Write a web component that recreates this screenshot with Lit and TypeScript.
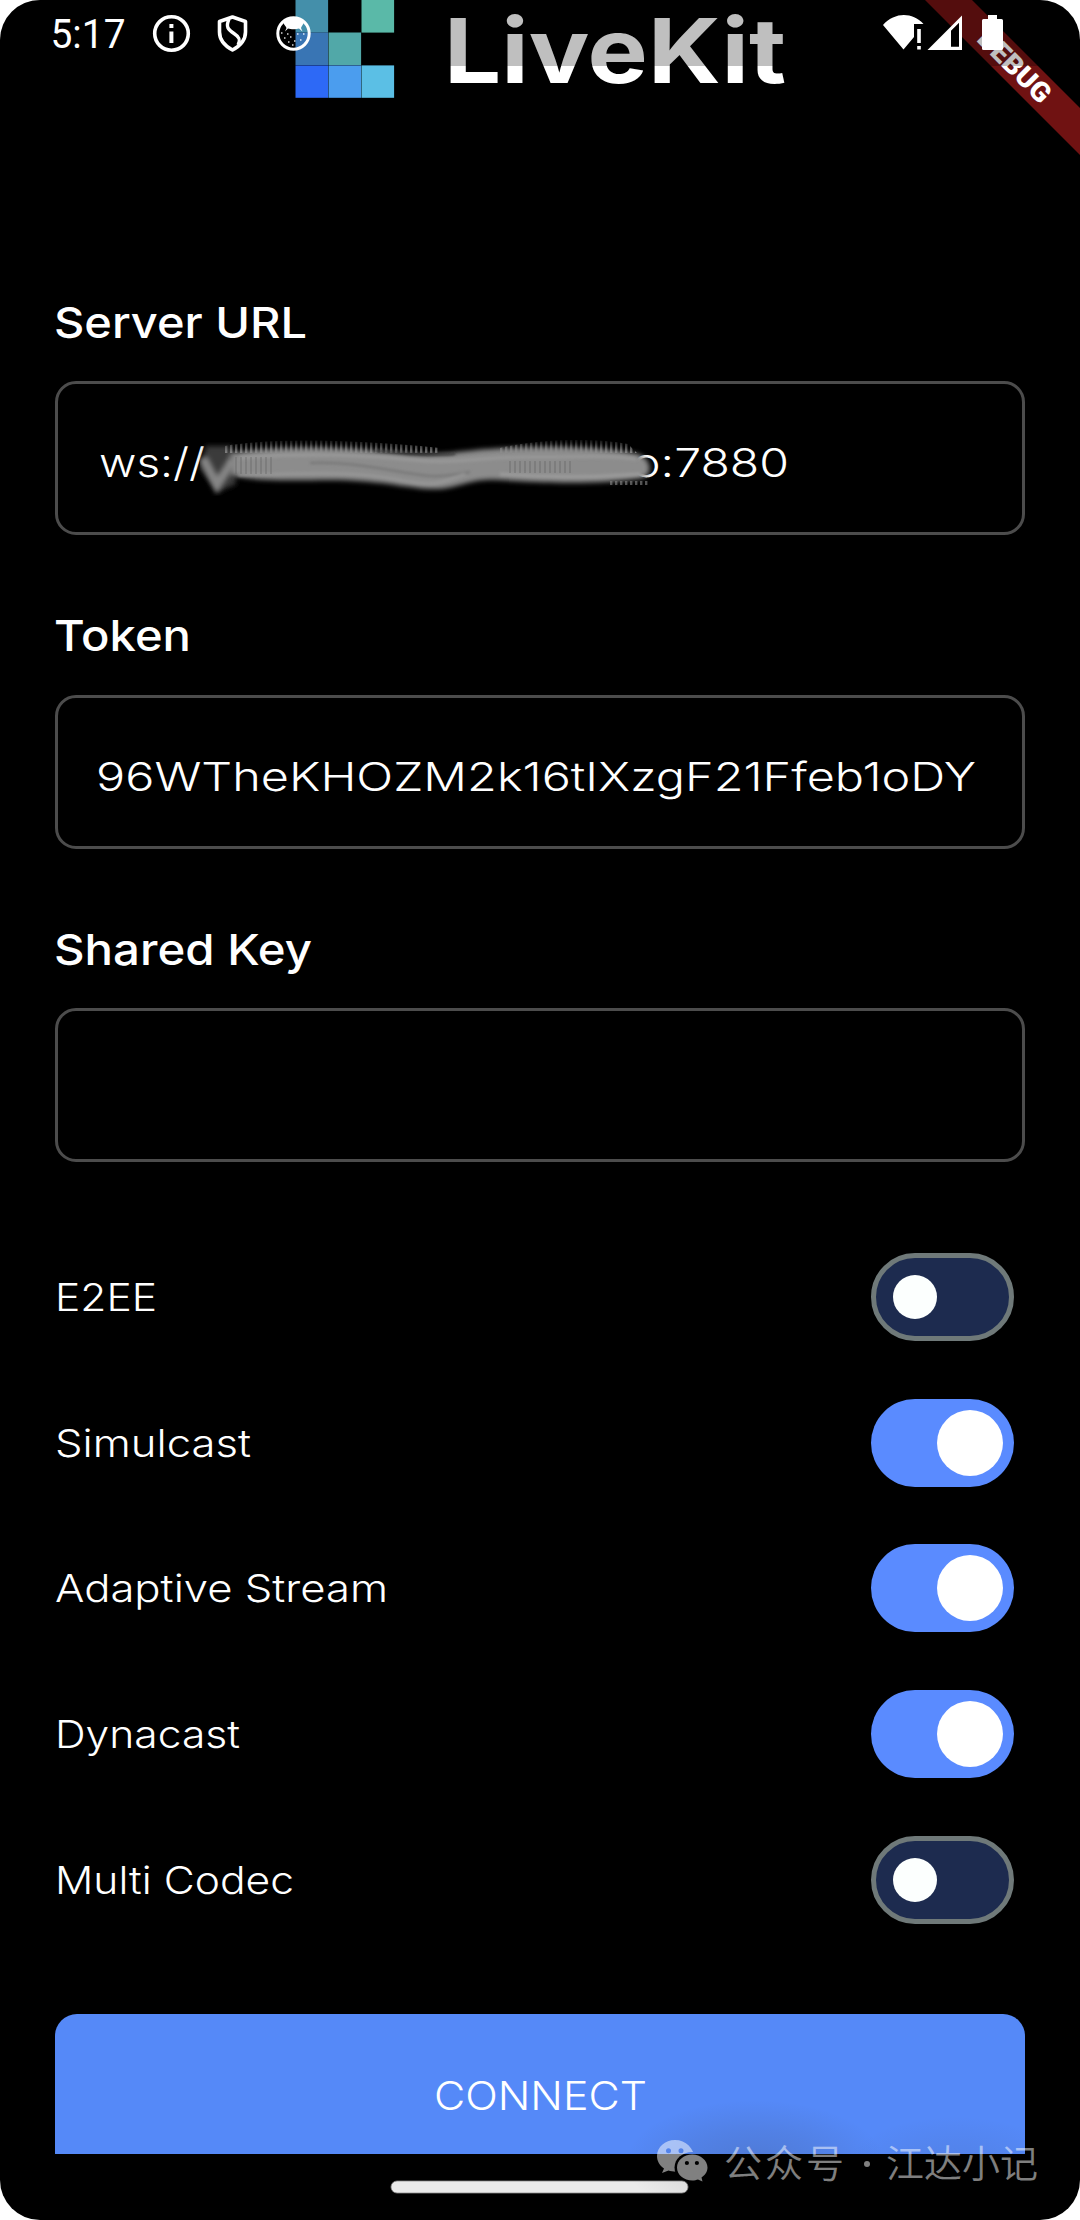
import { LitElement, html, svg, css } from "lit";
import { customElement, property } from "lit/decorators.js";

interface Field {
  label: string;
  width: number;
  kind: "url" | "token" | "empty";
}

interface Option {
  label: string;
  width: number;
  on: boolean;
}

const FIELDS: Field[] = [
  { label: "Server URL", width: 253, kind: "url" },
  { label: "Token", width: 137, kind: "token" },
  { label: "Shared Key", width: 258, kind: "empty" },
];

const OPTIONS: Option[] = [
  { label: "E2EE", width: 102, on: false },
  { label: "Simulcast", width: 196, on: true },
  { label: "Adaptive Stream", width: 333, on: true },
  { label: "Dynacast", width: 185, on: true },
  { label: "Multi Codec", width: 239, on: false },
];

/* A line of text whose advance is fitted to a fixed width. */
@customElement("fit-text")
class FitText extends LitElement {
  @property() text = "";
  @property({ type: Number }) width = 100;
  @property({ type: Number }) height = 44;
  @property({ type: Number }) baseline = 34;

  static styles = css`
    :host {
      display: block;
      flex: none;
    }
    svg {
      display: block;
      overflow: visible;
    }
    text {
      fill: currentColor;
    }
  `;

  render() {
    return html`<svg width=${this.width} height=${this.height}>
      <text x="0" y=${this.baseline} textLength=${this.width} lengthAdjust="spacingAndGlyphs">${this.text}</text>
    </svg>`;
  }
}

@customElement("toggle-switch")
class ToggleSwitch extends LitElement {
  @property({ type: Boolean, reflect: true }) on = false;

  static styles = css`
    :host {
      display: flex;
      align-items: center;
      box-sizing: border-box;
      width: 143px;
      height: 88px;
      border-radius: 44px;
      border: 5.5px solid #6f7979;
      background: #1d2b4f;
      padding: 0 16.5px;
    }
    :host([on]) {
      border: 0;
      background: #5a8bff;
      justify-content: flex-end;
      padding: 0 11px;
    }
    .knob {
      width: 44px;
      height: 44px;
      border-radius: 50%;
      background: #fcfffe;
    }
    :host([on]) .knob {
      width: 66px;
      height: 66px;
      background: #fff;
    }
  `;

  render() {
    return html`<span class="knob"></span>`;
  }
}

@customElement("app-root")
class AppRoot extends LitElement {
  static styles = css`
    :host {
      display: block;
      background: #fff;
      font-family: Inter, "Liberation Sans", sans-serif;
      color: #fff;
    }
    .screen {
      position: relative;
      width: 1080px;
      height: 2220px;
      border-radius: 40px;
      overflow: hidden;
      background: #000;
    }
    .page {
      box-sizing: border-box;
      height: 2154px;
      overflow: hidden;
      padding: 0 55px;
    }
    .brand {
      height: 303.5px;
      display: flex;
      padding-left: 240px;
    }
    .mark {
      display: block;
      flex: none;
    }
    .word {
      margin-left: 49px;
      font-size: 90px;
      font-weight: 700;
    }
    .fields {
      display: flex;
      flex-direction: column;
      gap: 82px;
    }
    .field {
      display: flex;
      flex-direction: column;
      gap: 33.5px;
    }
    .label {
      font-size: 43px;
      font-weight: 500;
      margin-left: -1px;
    }
    .box {
      box-sizing: border-box;
      height: 154px;
      border: 3px solid #4c4c4c;
      border-radius: 21px;
      display: flex;
      padding-left: 38px;
      font-size: 40px;
      font-weight: 350;
    }
    .scheme {
      margin-left: 3px;
    }
    .smudge {
      position: relative;
      z-index: 1;
      display: block;
      flex: none;
      overflow: visible;
    }
    .options {
      margin-top: 91px;
      display: flex;
      flex-direction: column;
      gap: 57.7px;
      font-size: 38.5px;
      font-weight: 350;
    }
    .option {
      display: flex;
      justify-content: space-between;
      padding-right: 11px;
    }
    .connect {
      margin-top: 90.7px;
      height: 160px;
      border-radius: 22px;
      background: #5589f8;
      display: flex;
      justify-content: center;
      font-size: 39px;
      font-weight: 350;
    }
    .overlay {
      position: absolute;
      left: 0;
      top: 0;
      display: block;
    }
    .clock {
      font-family: Roboto, sans-serif;
      font-size: 40px;
    }
    .debug {
      font-family: Roboto, sans-serif;
      font-size: 27.5px;
      font-weight: 900;
    }
    .credit {
      font-family: "Noto Sans CJK SC", sans-serif;
      font-size: 38px;
      font-weight: 350;
    }
  `;

  private renderValue(kind: Field["kind"]) {
    if (kind === "token") {
      return html`<fit-text text="96WTheKHOZM2k16tIXzgF21Ffeb1oDY" .width=${880} .height=${148} .baseline=${93}></fit-text>`;
    }
    if (kind === "url") {
      return html`<fit-text class="scheme" text="ws://" .width=${106} .height=${148} .baseline=${93}></fit-text>
        ${this.renderSmudge()}
        <fit-text text="o:7880" .width=${157} .height=${148} .baseline=${93}></fit-text>`;
    }
    return html``;
  }

  /* Rubbed-out part of the address; drawn in page coordinates. */
  private renderSmudge() {
    return html`<svg class="smudge" width="427" height="148" viewBox="205 384 427 148">
      <defs>
        <filter id="soft" x="-10%" y="-40%" width="120%" height="180%"><feGaussianBlur stdDeviation="2.8" /></filter>
        <filter id="fine" x="-10%" y="-60%" width="120%" height="220%"><feGaussianBlur stdDeviation="1.6" /></filter>
        <pattern id="comb" width="5" height="10" patternUnits="userSpaceOnUse">
          <rect width="2.4" height="10" fill="#8a8a8a" />
        </pattern>
        <linearGradient id="fade" x1="0" y1="0" x2="0" y2="1">
          <stop offset="0" stop-color="#000" /><stop offset="1" stop-color="#ddd" />
        </linearGradient>
        <mask id="top" maskUnits="userSpaceOnUse" x="190" y="438" width="470" height="20"><rect x="190" y="438" width="470" height="15" fill="url(#fade)" /></mask>
      </defs>
      <path d="M206 446 L232 446 L236 484 L218 492 L200 468Z" fill="#3a3a3a" filter="url(#soft)" />
      <path d="M203 458 L217 485 L233 460" fill="none" stroke="#858585" stroke-width="9" filter="url(#soft)" />
      <g mask="url(#top)">
        <path d="M225 446 C260 440 330 437 440 448 L440 456 L225 456Z M500 448 C540 438 600 438 628 444 L640 456 L500 456Z" fill="url(#comb)" />
      </g>
      <path d="M230 453 C290 445 350 448 400 453 C440 458 462 449 510 448 C560 446 610 448 638 454 C652 459 653 474 643 478
        C600 484 560 484 500 480 C465 478 460 490 430 489 C400 487 375 479 320 480 C275 481 252 480 231 475Z"
        fill="#8c8c8c" filter="url(#soft)" />
      <g fill="none" filter="url(#fine)">
        <path d="M240 458 C300 453 360 455 415 460 C450 464 480 457 530 457 S610 455 636 459" stroke="#999" stroke-width="3" />
        <path d="M310 463 C360 461 395 473 430 476 C450 477 456 474 470 472" stroke="#747474" stroke-width="2" />
        <path d="M375 451 C405 453 425 456 455 454" stroke="#333" stroke-width="2.2" />
        <path d="M238 475 C300 474 350 470 395 479 S440 482 465 474" stroke="#989898" stroke-width="2.5" />
        <path d="M500 474 C550 478 600 477 640 474" stroke="#9c9c9c" stroke-width="3" />
      </g>
      <path d="M236 457 V474 M241 457 V474 M246 457 V474 M251 457 V474 M256 457 V474 M261 457 V474 M266 457 V474 M271 457 V474 M510 461 V473 M515 461 V473 M520 461 V473 M525 461 V473 M530 461 V473 M535 461 V473 M540 461 V473 M545 461 V473 M550 461 V473 M555 461 V473 M560 461 V473 M565 461 V473 M570 461 V473" stroke="#5c5c5c" stroke-width="2" opacity=".3" />
      <path d="M610 483 H650" stroke="#8a8a8a" stroke-width="4" stroke-dasharray="2.4 2.6" opacity=".6" />
    </svg>`;
  }

  private renderStatus() {
    return html`<svg class="overlay" width="1080" height="170">
      <path d="M925 0 H972 L1080 108 V155Z" fill="#701212" />
      <g transform="translate(1014.3 65.7) rotate(45)">
        <text class="debug" x="-45" y="9.5" textLength="91" lengthAdjust="spacingAndGlyphs" fill="#fff">DEBUG</text>
      </g>
      <rect width="1080" height="66" fill="#000" fill-opacity=".25" />
      <text class="clock" x="50.5" y="48" textLength="75" lengthAdjust="spacingAndGlyphs" fill="#fff">5:17</text>
      <g fill="none" stroke="#fff" stroke-width="3.6">
        <circle cx="171.5" cy="33.5" r="16.8" />
        <path d="M171.4 24 V28 M171.4 31.5 V43" stroke-width="4" />
        <path d="M232.5 17 L219.5 21.5 V32 C219.5 40 225 46 232.5 50 C240 46 245.5 40 245.5 32 V21.5Z" stroke-linejoin="round" />
        <path d="M229 19 C225.5 27 228 29.5 234 33.5 C239.5 37 241 40 238 45" stroke-width="3.4" />
        <circle cx="293.5" cy="33.5" r="15.7" stroke-width="3" />
      </g>
      <path d="M283 22 C289 16 298 16 304 22 C303 25 301.5 26.5 301 28 L302.5 31.5 L299 28.5 C296 29.5 291 29.5 288 28.5 L285 31.5 L286.5 28 C286 26.5 284 25 283 22Z" fill="#fff" />
      <path d="M281 33 h1.5 M287 34 h1.5 M284 38 h1.5 M290 37 h1.5 M288 42 h1.5 M294 41 h1.5 M297 34 h1.5 M303 34 h1.5 M300 40 h1.5 M292 45 h1.5" stroke="#fff" stroke-width="1.4" opacity=".85" />
      <path d="M883 25 C895 12 912 12 923.5 24 H914 V37 L903.5 49.5Z" fill="#fff" />
      <path d="M917.2 29 h3.6 v14 h-3.6Z M917.2 46 h3.6 v3.6 h-3.6Z" fill="#fff" />
      <path fill-rule="evenodd" d="M962 15.5 V50 H927.5Z M951 31 V46.5 H959 V23Z" fill="#fff" />
      <path d="M951 31 L959 23 V46.5 H951Z" fill="#000" />
      <path d="M988 15 h9 v4 h4.5 q1.5 0 1.5 1.5 V48.5 q0 1.5 -1.5 1.5 H983.5 q-1.5 0 -1.5 -1.5 V20.5 q0 -1.5 1.5 -1.5 H988Z" fill="#fff" />
    </svg>`;
  }

  private renderFooter() {
    return html`<svg class="overlay" width="1080" height="2220">
      <defs>
        <radialGradient id="shade">
          <stop offset="0" stop-color="#333" stop-opacity=".18" />
          <stop offset=".5" stop-color="#333" stop-opacity=".1" />
          <stop offset="1" stop-color="#333" stop-opacity="0" />
        </radialGradient>
        <clipPath id="above"><rect x="55" y="2015" width="970" height="139" /><rect x="391" y="2181" width="297" height="12" /></clipPath>
        <mask id="front"><rect x="640" y="2120" width="100" height="80" fill="#fff" /><ellipse cx="692" cy="2167.5" rx="17.5" ry="15.5" fill="#000" /></mask>
      </defs>
      <rect x="391" y="2181" width="297" height="12" rx="6" fill="#ebebeb" stroke="#8a8a8a" stroke-width=".8" />
      <g clip-path="url(#above)">
        <ellipse cx="755" cy="2162" rx="130" ry="62" fill="url(#shade)" />
        <ellipse cx="955" cy="2168" rx="110" ry="52" fill="url(#shade)" opacity=".5" />
      </g>
      <g fill="#fff" fill-opacity=".5">
        <path mask="url(#front)" fill-rule="evenodd" d="M675 2140 C665 2140 657 2147 657 2156 C657 2161 659.5 2165.5 664 2168.5 L662 2173 L668.5 2170.5 C671 2171.5 676 2172 678 2171.5 L695 2160 C694 2148 686 2140 675 2140Z M666 2150.7 a2.5 2.5 0 1 0 5 0 a2.5 2.5 0 1 0 -5 0Z M678.5 2150.7 a2.5 2.5 0 1 0 5 0 a2.5 2.5 0 1 0 -5 0Z" />
        <path fill-rule="evenodd" d="M692.3 2154.5 C683.5 2154.5 677 2160.5 677 2167.5 C677 2175 684 2180.5 692.3 2180.5 C694.5 2180.5 696.5 2180 698 2179.5 L702.5 2181.5 L701.5 2177.5 C705 2175 707.5 2172 707.5 2167.5 C707.5 2160.5 700.5 2154.5 692.3 2154.5Z M684.8 2163 a2.1 2.1 0 1 0 4.2 0 a2.1 2.1 0 1 0 -4.2 0Z M694.8 2163 a2.1 2.1 0 1 0 4.2 0 a2.1 2.1 0 1 0 -4.2 0Z" />
        <text class="credit" x="724" y="2177" textLength="120" lengthAdjust="spacing">公众号</text>
        <circle cx="867" cy="2164" r="3" />
        <text class="credit" x="886" y="2177" textLength="152" lengthAdjust="spacing">江达小记</text>
      </g>
    </svg>`;
  }

  private renderMark() {
    const tiles: [number, number, string][] = [
      [0, 0, "#5bbfe3"],
      [66, 0, "#79f7e0"],
      [0, 32.5, "#4d9df0"],
      [33, 32.5, "#6de0e0"],
      [0, 65.2, "#2d69f6"],
      [33, 65.2, "#4b9dee"],
      [66, 65.2, "#5bbfe5"],
    ];
    return html`<svg class="mark" width="100" height="98">
      ${tiles.map(([x, y, c]) => svg`<rect x=${x + 0.5} y=${y} width="32.6" height="32.6" fill=${c} />`)}
    </svg>`;
  }

  render() {
    return html`<div class="screen">
      <div class="page">
        <div class="brand">
          ${this.renderMark()}
          <fit-text class="word" text="LiveKit" .width=${342} .height=${98} .baseline=${83.3}></fit-text>
        </div>
        <div class="fields">
          ${FIELDS.map(
            (f) => html`<div class="field">
              <fit-text class="label" .text=${f.label} .width=${f.width}></fit-text>
              <div class="box">${this.renderValue(f.kind)}</div>
            </div>`,
          )}
        </div>
        <div class="options">
          ${OPTIONS.map(
            (o) => html`<div class="option">
              <fit-text .text=${o.label} .width=${o.width} .height=${88} .baseline=${58}></fit-text>
              <toggle-switch ?on=${o.on}></toggle-switch>
            </div>`,
          )}
        </div>
        <div class="connect">
          <fit-text text="CONNECT" .width=${213} .height=${139} .baseline=${96}></fit-text>
        </div>
      </div>
      ${this.renderStatus()} ${this.renderFooter()}
    </div>`;
  }
}
